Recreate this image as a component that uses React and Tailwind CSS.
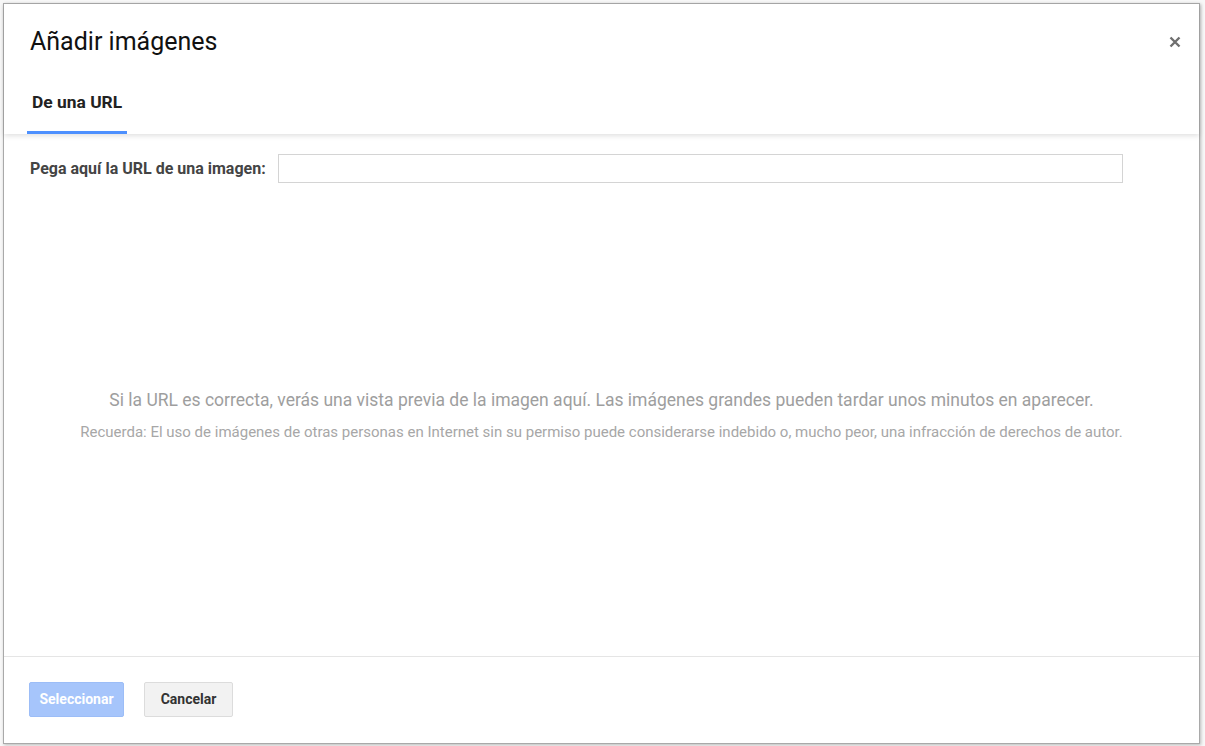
import React from 'react';

const CloseIcon = () => (
  <svg width="12" height="12" viewBox="0 0 12 12" className="block">
    <path d="M1.5 1.5 L10.5 10.5 M10.5 1.5 L1.5 10.5" stroke="#6f6f6f" strokeWidth="2.4" strokeLinecap="butt" />
  </svg>
);

const App = () => {
  return (
    <div className="w-[1205px] h-[746px] bg-[#f7f7f7] pt-[3px] pl-[3px] overflow-hidden font-['Roboto',sans-serif]">
      <div className="w-[1197px] h-[741px] bg-white border border-[#a9a9a9] shadow-[1px_1px_3px_rgba(0,0,0,0.25)] flex flex-col">
        <div className="h-[130px] shrink-0 flex flex-col shadow-[0_2px_5px_rgba(0,0,0,0.12)] relative z-10">
          <div className="flex items-start justify-between pl-[26px] pr-[18px] pt-[23px]">
            <h1 className="text-[25px] leading-[30px] text-[#111]">Añadir imágenes</h1>
            <button className="mt-[9px] p-0">
              <CloseIcon />
            </button>
          </div>
          <div className="mt-auto pl-[23px] flex">
            <div className="px-[5px] pb-[16px] border-b-[3px] border-[#4d90fe] w-[100px]">
              <span className="text-[17.4px] leading-[20px] font-bold text-[#222] whitespace-nowrap">De una URL</span>
            </div>
          </div>
        </div>
        <div className="flex-1 flex flex-col px-[26px] pt-[20px]">
          <div className="flex items-center">
            <label className="text-[16px] font-bold text-[#444] mr-[12px] whitespace-nowrap">Pega aquí la URL de una imagen:</label>
            <input className="w-[845px] h-[29px] border border-[#d4d4d4] outline-none px-2 text-sm" />
          </div>
          <div className="flex-1 flex flex-col items-center justify-center text-center text-[#9e9e9e] pb-[10px]">
            <p className="text-[17.5px] leading-[22px] whitespace-nowrap">Si la URL es correcta, verás una vista previa de la imagen aquí. Las imágenes grandes pueden tardar unos minutos en aparecer.</p>
            <p className="text-[15px] leading-[18px] mt-[12px] text-[#a7a7a7] whitespace-nowrap">Recuerda: El uso de imágenes de otras personas en Internet sin su permiso puede considerarse indebido o, mucho peor, una infracción de derechos de autor.</p>
          </div>
        </div>
        <div className="h-[87px] shrink-0 border-t border-[#e5e5e5] flex items-center pl-[25px] gap-[20px] pb-[1px]">
          <button className="w-[95px] h-[35px] rounded-[2px] bg-[#a6c5fb] border border-[#9cbdf7] text-white text-[14px] font-bold">Seleccionar</button>
          <button className="w-[89px] h-[35px] rounded-[2px] bg-[#f2f2f2] border border-[#dcdcdc] text-[#333] text-[14px] font-bold">Cancelar</button>
        </div>
      </div>
    </div>
  );
};

export default App;
